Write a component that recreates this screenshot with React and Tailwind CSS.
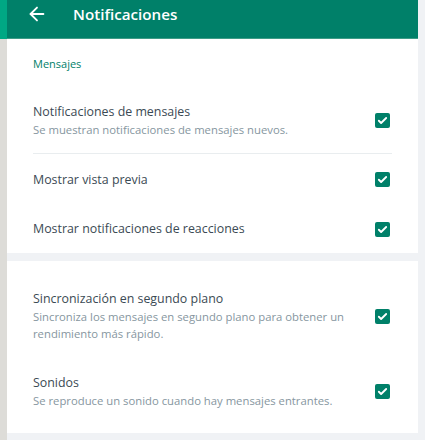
import React from "react";
import { ArrowLeft } from "lucide-react";

const CheckBox = () => (
  <div className="mr-[2px] flex h-[15px] w-[15px] shrink-0 items-center justify-center rounded-[2px] bg-[#008069]">
    <svg width="11" height="11" viewBox="0 0 24 24" fill="none" stroke="white" strokeWidth="4" strokeLinecap="round" strokeLinejoin="round">
      <path d="M4 12.5l5 5L20 6.5" />
    </svg>
  </div>
);

const SettingRow = ({ title, subtitle, className = "" }) => (
  <div className={`flex items-center justify-between ${className}`}>
    <div className="pr-6">
      <div className="text-[12.4px] leading-[18px] text-[#3b4a54]">{title}</div>
      {subtitle && (
        <div className="text-[11.3px] leading-[17px] text-[#8696a0]">{subtitle}</div>
      )}
    </div>
    <CheckBox />
  </div>
);

export default function App() {
  return (
    <div className="flex h-[440px] w-[425px] overflow-hidden bg-[#f0f2f5] font-['Open_Sans',sans-serif]">
      <div className="flex w-[7px] flex-col">
        <div className="h-[39px] bg-[#00a884]" />
        <div className="flex-1 bg-[#dddcd8]" />
      </div>

      <div className="flex w-[411px] flex-col">
        <header className="flex h-[39px] items-center border-b border-[#3d9c87] bg-[#008069] pb-[10px] text-white">
          <ArrowLeft size={22} strokeWidth={2} className="ml-[19px]" />
          <h1 className="ml-[25px] text-[15.2px] font-semibold leading-[20px]">Notificaciones</h1>
        </header>

        <section className="bg-white px-[26px] pt-[16px]">
          <div className="mb-[16px] text-[11px] leading-[17px] text-[#008069]">Mensajes</div>
          <SettingRow
            className="border-b border-[#e9edef] py-[15px]"
            title="Notificaciones de mensajes"
            subtitle="Se muestran notificaciones de mensajes nuevos."
          />
          <SettingRow className="h-[51px]" title="Mostrar vista previa" />
          <SettingRow className="h-[48px]" title="Mostrar notificaciones de reacciones" />
        </section>

        <div className="h-[8px]" />

        <section className="flex flex-col gap-[32px] bg-white px-[26px] pb-[24px] pt-[29px]">
          <SettingRow
            title="Sincronización en segundo plano"
            subtitle="Sincroniza los mensajes en segundo plano para obtener un rendimiento más rápido."
          />
          <SettingRow
            title="Sonidos"
            subtitle="Se reproduce un sonido cuando hay mensajes entrantes."
          />
        </section>
      </div>
    </div>
  );
}
